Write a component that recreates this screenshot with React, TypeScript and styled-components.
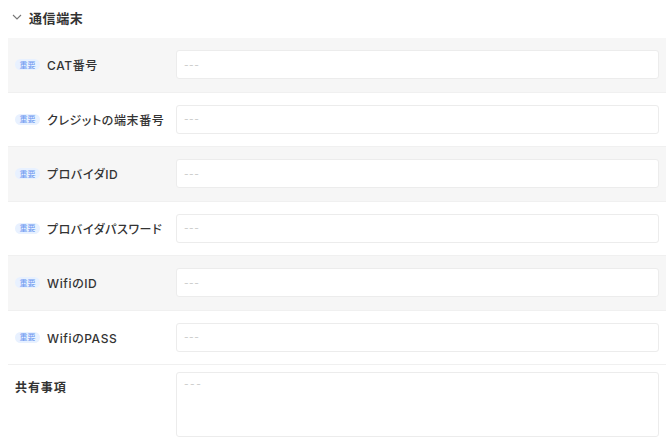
import styled, { createGlobalStyle } from 'styled-components'

const GlobalStyle = createGlobalStyle`
  body {
    margin: 0;
    background: #fff;
    font-family: Inter, "Noto Sans CJK JP", sans-serif;
    color: #333;
  }
`

const fields = [
  { label: 'CAT番号' },
  { label: 'クレジットの端末番号' },
  { label: 'プロバイダID' },
  { label: 'プロバイダパスワード' },
  { label: 'WifiのID' },
  { label: 'WifiのPASS' },
]

const App = () => {
  return (
    <>
      <GlobalStyle />
      <Section>
        <Header>
          <Chevron viewBox='0 0 10 6'>
            <path d='M1 1l4 4 4-4' fill='none' stroke='#777' strokeWidth='1.1' />
          </Chevron>
          <Title>通信端末</Title>
        </Header>
        {fields.map((f, i) => (
          <Row key={f.label} $shaded={i % 2 === 0}>
            <LabelCell>
              <Badge>重要</Badge>
              <Label>{f.label}</Label>
            </LabelCell>
            <Input placeholder='---' />
          </Row>
        ))}
        <NoteRow>
          <NoteLabel>共有事項</NoteLabel>
          <TextArea placeholder='---' />
        </NoteRow>
      </Section>
    </>
  )
}

const Section = styled.div`
  padding: 0 4px 0 8px;
`

const Header = styled.div`
  height: 38px;
  display: flex;
  align-items: center;
  gap: 7px;
  padding: 0 0 4px 4px;
  box-sizing: border-box;
`

const Chevron = styled.svg`
  width: 10px;
  height: 6px;
`

const Title = styled.h2`
  margin: 0;
  font-size: 13px;
  font-weight: 700;
  letter-spacing: 0.6px;
  color: #333;
`

const Row = styled.div<{ $shaded: boolean }>`
  height: 54.5px;
  box-sizing: border-box;
  display: flex;
  align-items: center;
  padding: 0 7px;
  background: ${(p) => (p.$shaded ? '#f6f6f6' : '#fff')};
  border-bottom: 1px solid #f0f0f0;
`

const LabelCell = styled.div`
  width: 161px;
  flex-shrink: 0;
  display: flex;
  align-items: center;
  gap: 7px;
`

const Badge = styled.span`
  display: inline-flex;
  align-items: center;
  justify-content: center;
  width: 25px;
  height: 11px;
  border-radius: 6px;
  background: #e8f1ff;
  color: #6b98f0;
  font-family: "Noto Sans CJK JP", sans-serif;
  font-size: 8px;
  font-weight: 400;
  line-height: 1;
`

const Label = styled.span`
  font-size: 12px;
  font-weight: 500;
  letter-spacing: 0.6px;
  font-feature-settings: "palt";
  color: #333;
`

const Input = styled.input`
  flex: 1;
  height: 29px;
  box-sizing: border-box;
  border: 1px solid #ececec;
  border-radius: 3px;
  background: #fff;
  padding: 0 7px;
  font-family: inherit;
  font-size: 10px;
  letter-spacing: 0.5px;
  outline: none;

  &::placeholder {
    color: #c8c8c8;
  }
`

const NoteRow = styled.div`
  display: flex;
  align-items: flex-start;
  padding: 7px 7px 0;
`

const NoteLabel = styled.div`
  width: 161px;
  flex-shrink: 0;
  padding-top: 6px;
  font-size: 12px;
  font-weight: 600;
  letter-spacing: 0.9px;
  color: #333;
`

const TextArea = styled.textarea`
  flex: 1;
  height: 65px;
  box-sizing: border-box;
  border: 1px solid #ececec;
  border-radius: 3px;
  padding: 5px 7px;
  font-size: 10px;
  font-family: inherit;
  letter-spacing: 1.5px;
  resize: none;
  outline: none;

  &::placeholder {
    color: #c8c8c8;
  }
`

export default App
